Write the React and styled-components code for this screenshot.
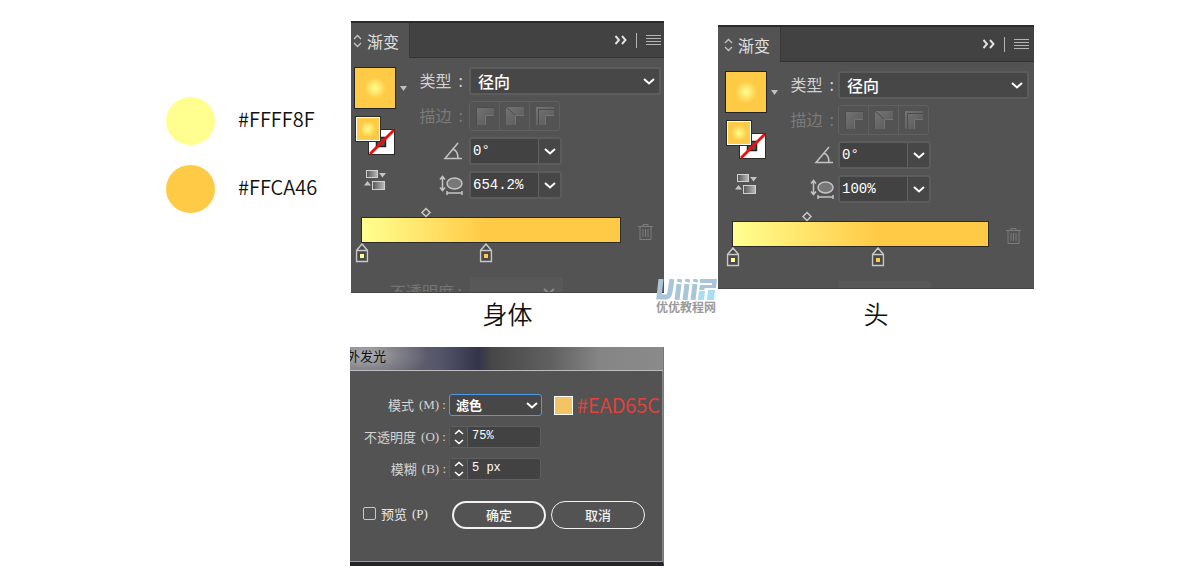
import React from "react";
import styled, { createGlobalStyle } from "styled-components";

const GlobalStyle = createGlobalStyle`
* {
box-sizing: border-box;
}
body {
margin: 0;
background: #fff;
font-family: "Noto Sans CJK SC", sans-serif;
}
input, select, button {
font-family: inherit;
margin: 0;
}
`;
const Board = styled.main`
display: grid;
grid-template-columns: 185fr 313fr 54fr 316fr;
max-width: 868px;
margin: 0 auto;
padding: 21px 0 8px;
`;
const Palette = styled.ul`
list-style: none;
margin: 0;
padding: 76px 0 0;
display: flex;
flex-direction: column;
gap: 20px;
`;
const PaletteItem = styled.li`
display: flex;
align-items: center;
gap: 23px;
font-size: 20px;
line-height: 44px;
height: 48px;
font-weight: 350;
color: #111;
& p {
margin: 0;
height: 48px;
}
`;
const Dot = styled.span`
width: 49px;
height: 48px;
border-radius: 50%;
background: ${props => props.$color};
`;
const Column = styled.div`
grid-column: ${props => props.$start};
min-width: 0;
padding-top: ${props => props.$drop ? '4px' : '0'};
`;
const Figure = styled.figure`
position: relative;
margin: 0;
`;
const Caption = styled.figcaption`
font-size: 25px;
line-height: 40px;
height: 54px;
padding-top: ${props => props.$wide ? '4px' : '0'};
text-align: center;
font-weight: 350;
color: #111;
`;
const Panel = styled.section`
height: ${props => props.$wide ? '264px' : '272px'};
overflow: hidden;
background: #535353;
border-bottom: 1px solid #454545;
color: #d2d2d2;
`;
const TabBar = styled.div`
display: flex;
align-items: center;
height: 37px;
background: #424242;
border-top: 2px solid #2b2b2b;
`;
const Tab = styled.div`
display: flex;
align-items: center;
gap: 5px;
align-self: stretch;
padding: 0 10px 0 ${props => props.$wide ? '6px' : '2px'};
background: #535353;
font-size: 16px;
line-height: 34px;
color: #e0e0e0;
border-right: 1px solid #383838;
`;
const TabTools = styled.div`
display: flex;
align-items: center;
gap: 9px;
flex: 1;
justify-content: flex-end;
align-self: stretch;
padding-right: ${props => props.$wide ? '5px' : '3px'};
border-bottom: 1px solid #333;
`;
const Divider = styled.span`
width: 1px;
height: 15px;
background: #b5b5b5;
`;
const IconButton = styled.button`
display: flex;
padding: 0;
border: none;
background: none;
color: ${props => props.$dim ? '#7c7c7c' : '#e4e4e4'};
`;
const PanelBody = styled.div`
display: grid;
grid-template-columns: 53px 56px 1fr;
column-gap: ${props => props.$wide ? '2px' : '3px'};
padding: 9px ${props => props.$wide ? '5px 0 7px' : '3px 0 3px'};
`;
const SwatchColumn = styled.div`
display: flex;
flex-direction: column;
align-items: flex-start;
`;
const SwatchRow = styled.div`
display: flex;
align-items: center;
gap: 4px;
`;
const BigSwatch = styled.div`
width: 42px;
height: 42px;
border: 1px solid #22242c;
background: radial-gradient(circle, #ffff8f 0, #ffca46 11px);
`;
const FillStroke = styled.div`
display: grid;
grid-template-columns: 13px 13px 14px;
grid-template-rows: 13px 13px 13px;
margin: 7px 0 14px 1px;
`;
const FillBox = styled.div`
grid-area: 1 / 1 / 3 / 3;
z-index: 1;
border: 1px solid #2b2b2b;
outline: 1px solid #fff;
outline-offset: -2px;
background: radial-gradient(circle, #ffff8f 0, #ffca46 8px);
`;
const StrokeBox = styled.svg`
grid-area: 2 / 2 / 4 / 4;
width: 27px;
height: 26px;
`;
const Reverse = styled.div`
padding-left: 10px;
`;
const Labels = styled.div`
display: grid;
grid-template-rows: 28px 30px 28px 28px;
row-gap: 6px;
justify-items: end;
align-items: center;
padding-right: ${props => props.$wide ? '2px' : '3px'};
`;
const Label = styled.label`
display: flex;
gap: 7px;
font-size: 16px;
line-height: 26px;
height: 28px;
white-space: nowrap;
color: ${props => props.$dim ? '#7a7a7a' : '#d2d2d2'};
`;
const Fields = styled.div`
display: grid;
grid-template-rows: 28px 30px 28px 28px;
row-gap: 6px;
`;
const SelectBox = styled.div`
position: relative;
display: flex;
width: ${props => props.$small ? '93px' : 'auto'};
& svg {
position: absolute;
top: 50%;
right: ${props => props.$small ? '3px' : '5px'};
margin-top: -6px;
pointer-events: none;
}
`;
const Select = styled.select`
appearance: none;
width: 100%;
height: ${props => props.$small ? '22px' : '28px'};
padding: 0 ${props => props.$small ? '6px' : '7px'} 2px;
border: ${props => props.$small ? '1px solid #4a9ce8' : '2px solid #5c5c5c'};
border-radius: 3px;
background: #474747;
color: #fff;
font-size: ${props => props.$small ? '13px' : '16px'};
font-weight: ${props => props.$small ? '700' : '500'};
`;
const StrokeGroup = styled.div`
display: flex;
width: 91px;
border: 1px solid #606060;
border-radius: 3px;
`;
const StrokeButton = styled.button`
flex: 1;
display: flex;
align-items: center;
justify-content: center;
padding: 0;
border: none;
background: none;
border-left: ${props => props.$first ? 'none' : '1px solid #606060'};
`;
const Combo = styled.div`
display: flex;
width: 93px;
border: 2px solid #5c5c5c;
border-radius: 3px;
background: #474747;
`;
const ComboInput = styled.input`
width: 67px;
padding: 0 0 1px 2px;
border: none;
background: #424242;
color: #fff;
font-family: "Liberation Mono", monospace;
font-size: 14px;
`;
const ComboButton = styled.button`
flex: 1;
display: flex;
align-items: center;
justify-content: center;
padding: 0;
border: none;
border-left: 1px solid #626262;
background: none;
`;
const GradientRow = styled.div`
display: flex;
align-items: flex-start;
gap: 17px;
padding: 8px ${props => props.$wide ? '13px 0 14px' : '11px 0 10px'};
`;
const Ramp = styled.div`
flex: 1;
`;
const Track = styled.div`
position: relative;
height: ${props => props.$h}px;
`;
const Bar = styled.div`
height: 26px;
border: 1px solid #2b2b2b;
background: linear-gradient(to right, #ffff8f, #ffca46 ${props => props.$end}%);
`;
const Marker = styled.svg`
position: absolute;
top: 0;
transform: translateX(-50%);
`;
const Trash = styled(IconButton)`
padding-top: 16px;
`;
const Ghost = styled.div`
display: flex;
justify-content: flex-end;
gap: 8px;
padding: ${props => props.$wide ? '14px 103px 0 0' : '14px 101px 0 0'};
font-size: 16px;
line-height: 28px;
color: ${props => props.$wide ? '#686868' : '#747474'};
& div {
width: 93px;
height: 28px;
display: flex;
justify-content: flex-end;
padding: 8px 7px;
background: #585858;
}
& svg {
opacity: 0.3;
}
`;
const Watermark = styled.div`
position: absolute;
left: 100%;
top: 258px;
width: 64px;
margin-left: -8px;
z-index: 2;
font-size: 12px;
line-height: 14px;
font-weight: 700;
color: #9a9a9a;
white-space: nowrap;
& svg {
display: block;
}
`;
const Dialog = styled.form`
margin: 0 0 0 -1px;
background: #535353;
border-right: 1px solid #777;
border-bottom: 4px solid #23232b;
`;
const DialogTitle = styled.h2`
margin: 0;
height: 24px;
overflow: hidden;
text-indent: -3px;
font-size: 13px;
line-height: 18px;
font-weight: 400;
color: #111;
background: radial-gradient(62px 26px at 16px 8px, #b0b0b3 0, rgba(150,150,155,0.6) 50%, transparent 100%),
linear-gradient(to right, #77777d, #55556a 90px, #33344a 128px, #474747 142px, #606060 200px, #858585 250px, #8a8a8a);
border-bottom: 1px solid #bdbdbd;
`;
const DialogBody = styled.div`
display: flex;
flex-direction: column;
gap: 10px;
padding: 23px 0 32px;
border-right: 1px solid #888;
border-bottom: 1px solid #999;
`;
const DialogRow = styled.div`
display: grid;
grid-template-columns: 96px 93px 1fr;
column-gap: 3px;
align-items: center;
height: 22px;
`;
const DialogLabel = styled.label`
display: flex;
align-items: center;
justify-content: flex-end;
gap: 5px;
font-size: 13px;
line-height: 22px;
color: #d4d4d4;
white-space: nowrap;
`;
const Key = styled.span`
font-family: "Liberation Serif", serif;
font-size: 13px;
`;
const Spinner = styled.div`
display: flex;
width: 92px;
height: 22px;
border: 1px solid #5f5f5f;
border-radius: 3px;
background: #424242;
`;
const SpinButton = styled.button`
width: 18px;
display: flex;
align-items: center;
justify-content: center;
padding: 0;
border: none;
border-right: 1px solid #5f5f5f;
background: #4a4a4a;
`;
const SpinInput = styled.input`
flex: 1;
min-width: 0;
padding: 0 0 3px 4px;
border: none;
background: none;
color: #fff;
font-family: "Liberation Mono", monospace;
font-size: 12px;
`;
const GlowColor = styled.div`
display: flex;
align-items: center;
gap: 4px;
padding-left: 9px;
font-size: 20px;
line-height: 22px;
font-weight: 350;
color: #e8403c;
`;
const GlowSwatch = styled.span`
width: 19px;
height: 19px;
border: 1px solid #fff;
background: #f4c463;
`;
const Actions = styled.div`
display: flex;
align-items: center;
gap: 5px;
padding: 11px 0 0 13px;
`;
const Preview = styled.label`
display: flex;
align-items: center;
gap: 5px;
width: 84px;
padding-bottom: 3px;
font-size: 13px;
line-height: 20px;
color: #e8e8e8;
white-space: nowrap;
`;
const Checkbox = styled.input`
appearance: none;
width: 13px;
height: 13px;
border: 1px solid #c8c8c8;
border-radius: 2px;
`;
const PillButton = styled.button`
width: 94px;
height: 28px;
padding: 0 0 2px;
border: ${props => props.$primary ? '2px' : '1px'} solid #f2f2f2;
border-radius: 14px;
background: none;
color: #f2f2f2;
font-size: 13px;
font-weight: 500;
`;

function Chevron() {
  return (
      <svg width="14" height="12" viewBox="0 0 14 12" fill="none" stroke="#fff" strokeWidth="2">
        <path d="M2 4l5 4.500L12 4"/>
      </svg>
  )
}

function StrokeIcon({id, d}) {
  return (
      <svg width="20" height="20" viewBox="0 0 20 20">
        <defs>
          <linearGradient id={id} x1="0" y1="0" x2="1" y2="1">
            <stop offset="0" stopColor="#747474"/>
            <stop offset="1" stopColor="#585858"/>
          </linearGradient>
        </defs>
        <path d="M1 1h18v8h-9v10H1z" fill={`url(#${id})`}/>
        <path d={d} fill="none" stroke="#4c4c4c"/>
        <path d="M19 9.500h-8.500V19" fill="none" stroke="#747474"/>
      </svg>
  )
}

function Stop({color, at}) {
  return (
      <Marker style={{left: at}} width="13" height="20" viewBox="0 0 13 20" fill="none">
        <path d="M1 7.500L6.500 1 12 7.500V18.500H1z" fill="#4a4a4a" stroke="#c8c8c8" strokeWidth="1.500"/>
        <path d="M1 7.500h11" stroke="#c8c8c8" strokeWidth="1.500"/>
        <rect x="4.500" y="11" width="4" height="4" fill={color}/>
      </Marker>
  )
}

function GradientPanel({id, wide, aspect, middle, end}) {
  return (
      <Panel $wide={wide}>
        <TabBar>
          <Tab $wide={wide}>
            <svg width="9" height="14" viewBox="0 0 9 14" fill="none" stroke="#c4c4c4" strokeWidth="1.300">
              <path d="M1 5l3.500-3.500L8 5M1 9l3.500 3.500L8 9"/>
            </svg>
            渐变
          </Tab>
          <TabTools $wide={wide}>
            <IconButton type="button" aria-label="collapse">
              <svg width="13" height="10" viewBox="0 0 13 10" fill="none" stroke="currentColor" strokeWidth="1.900">
                <path d="M1.500 1L5 5 1.500 9M8 1l3.500 4L8 9"/>
              </svg>
            </IconButton>
            <Divider/>
            <IconButton type="button" aria-label="menu">
              <svg width="15" height="12" viewBox="0 0 15 12" stroke="#b5b5b5">
                <path d="M0 1.500h15M0 4.500h15M0 7.500h15M0 10.500h15"/>
              </svg>
            </IconButton>
          </TabTools>
        </TabBar>
        <PanelBody $wide={wide}>
          <SwatchColumn>
            <SwatchRow>
              <BigSwatch/>
              <svg width="7" height="5" viewBox="0 0 7 5"><path d="M0 0h7L3.500 5z" fill="#c0c0c0"/></svg>
            </SwatchRow>
            <FillStroke>
              <FillBox/>
              <StrokeBox viewBox="0 0 27 26">
                <rect x="0.500" y="0.500" width="26" height="25" fill="#fff" stroke="#2b2b2b"/>
                <rect x="8.500" y="8.500" width="9" height="9" fill="#535353" stroke="#222" strokeWidth="1.500"/>
                <path d="M2 25L26 1" stroke="#f00d0d" strokeWidth="2.800"/>
              </StrokeBox>
            </FillStroke>
            <Reverse>
              <svg width="23" height="21" viewBox="0 0 23 21">
                <defs>
                  <linearGradient id={id + 'rev'}>
                    <stop offset="0" stopColor="#555"/>
                    <stop offset="1" stopColor="#bbb"/>
                  </linearGradient>
                </defs>
                <rect x="2.500" y="1.500" width="11" height="7" fill={`url(#${id}rev)`} stroke="#d0d0d0"/>
                <rect x="8.500" y="12.500" width="12" height="8" fill={`url(#${id}rev)`} stroke="#d0d0d0"/>
                <path d="M15 4h7l-3.500 4.500zM0 16.500h7L3.500 12z" fill="#c4c4c4"/>
              </svg>
            </Reverse>
          </SwatchColumn>
          <Labels $wide={wide}>
            <Label htmlFor={id + 'type'}>类型<span>:</span></Label>
            <Label as="span" $dim>描边<span>:</span></Label>
            <svg width="20" height="18" viewBox="0 0 20 18" fill="none" stroke="#c4c4c4" strokeWidth="1.500">
              <path d="M15 1L2 16.500h17M10 7q5 2 5 9.500"/>
            </svg>
            <svg width="24" height="20" viewBox="0 0 24 20" fill="none" stroke="#c4c4c4" strokeWidth="1.500">
              <path d="M3.500 2v13M1 4.500L3.500 1.500 6 4.500M1 12.500l2.500 3 2.500-3M8 18h15M8 16v4M23 16v4"/>
              <ellipse cx="15.500" cy="8.500" rx="7.500" ry="5.500" fill="#777"/>
            </svg>
          </Labels>
          <Fields>
            <SelectBox>
              <Select id={id + 'type'}>
                <option>径向</option>
              </Select>
              <Chevron/>
            </SelectBox>
            <StrokeGroup>
              <StrokeButton type="button" $first disabled aria-label="within stroke"><StrokeIcon id={id + 's1'} d="M1.500 19V1.500H19"/></StrokeButton>
              <StrokeButton type="button" disabled aria-label="along stroke"><StrokeIcon id={id + 's2'} d="M1 1l9 8"/></StrokeButton>
              <StrokeButton type="button" disabled aria-label="across stroke"><StrokeIcon id={id + 's3'} d="M3.500 19V3.500H19"/></StrokeButton>
            </StrokeGroup>
            <Combo>
              <ComboInput aria-label="angle" defaultValue="0°"/>
              <ComboButton type="button" aria-label="angle list"><Chevron/></ComboButton>
            </Combo>
            <Combo>
              <ComboInput aria-label="aspect ratio" defaultValue={aspect}/>
              <ComboButton type="button" aria-label="aspect ratio list"><Chevron/></ComboButton>
            </Combo>
          </Fields>
        </PanelBody>
        <GradientRow $wide={wide}>
          <Ramp>
            <Track $h={10}>
              <Marker style={{left: middle + '%'}} width="11" height="11" viewBox="0 0 11 11">
                <path d="M5.500 1.500l4 4-4 4-4-4z" fill="none" stroke="#c8c8c8" strokeWidth="1.500"/>
              </Marker>
            </Track>
            <Bar $end={end}/>
            <Track $h={20}>
              <Stop color="#ffff8f" at="1px"/>
              <Stop color="#ffca46" at={end + '%'}/>
            </Track>
          </Ramp>
          <Trash type="button" $dim aria-label="delete stop">
            <svg width="15" height="18" viewBox="0 0 15 18" fill="none" stroke="currentColor">
              <path d="M0 3.500h15M5 3V1.500h5V3M2 4v12.500h11V4M5 6v8M7.500 6v8M10 6v8"/>
            </svg>
          </Trash>
        </GradientRow>
        <Ghost $wide={wide}>
          <span>不透明度 :</span>
          <div><Chevron/></div>
        </Ghost>
      </Panel>
  )
}

function SpinField({id, value}) {
  return (
      <Spinner>
        <SpinButton type="button" aria-label="step">
          <svg width="10" height="16" viewBox="0 0 10 16" fill="none" stroke="#fff" strokeWidth="1.600">
            <path d="M1 5l4-3.500L9 5M1 11l4 3.500L9 11"/>
          </svg>
        </SpinButton>
        <SpinInput id={id} defaultValue={value}/>
      </Spinner>
  )
}

function GlowDialog() {
  return (
      <Dialog>
        <DialogTitle>外发光</DialogTitle>
        <DialogBody>
          <DialogRow>
            <DialogLabel htmlFor="mode">模式<Key>(M) :</Key></DialogLabel>
            <SelectBox $small>
              <Select id="mode" $small>
                <option>滤色</option>
              </Select>
              <Chevron/>
            </SelectBox>
            <GlowColor><GlowSwatch/>#EAD65C</GlowColor>
          </DialogRow>
          <DialogRow>
            <DialogLabel htmlFor="opacity">不透明度<Key>(O) :</Key></DialogLabel>
            <SpinField id="opacity" value="75%"/>
          </DialogRow>
          <DialogRow>
            <DialogLabel htmlFor="blur">模糊<Key>(B) :</Key></DialogLabel>
            <SpinField id="blur" value="5 px"/>
          </DialogRow>
          <Actions>
            <Preview><Checkbox type="checkbox"/>预览<Key>(P)</Key></Preview>
            <PillButton type="button" $primary>确定</PillButton>
            <PillButton type="button">取消</PillButton>
          </Actions>
        </DialogBody>
      </Dialog>
  )
}

function App() {
  return (
      <>
        <GlobalStyle/>
        <Board>
          <Palette>
            <PaletteItem><Dot $color="#ffff8f"/><p>#FFFF8F</p></PaletteItem>
            <PaletteItem><Dot $color="#ffca46"/><p>#FFCA46</p></PaletteItem>
          </Palette>
          <Column $start={2}>
            <Figure>
              <GradientPanel id="body" aspect="654.2%" middle={25} end={48}/>
              <Caption>身体</Caption>
              <Watermark>
                <svg width="62" height="21" viewBox="0 0 62 21" fill="none" strokeWidth="5">
                  <path d="M5 0L3 18h7q3 0 4-5l2-13M23 5l-2 16M31 5l-2 16M39 5l-2 16" stroke="#a9c6d8"/>
                  <path d="M24 0l-1 3M32 0l-1 3M40 0l-1 3" stroke="#a9c6d8"/>
                  <path d="M44 0h17l-1 9H49l-1 2h-5l1-5h12V4H44z" fill="#a9c6d8"/>
                  <path d="M43 12h6l-1 9h-6zM52 11h7l-1 10h-7z" fill="#a8dcf2"/>
                </svg>
                优优教程网
              </Watermark>
            </Figure>
            <GlowDialog/>
          </Column>
          <Column $start={4} $drop>
            <Figure>
              <GradientPanel id="head" wide aspect="100%" middle={29} end={57}/>
              <Caption $wide>头</Caption>
            </Figure>
          </Column>
        </Board>
      </>
  )
}

export default App;
